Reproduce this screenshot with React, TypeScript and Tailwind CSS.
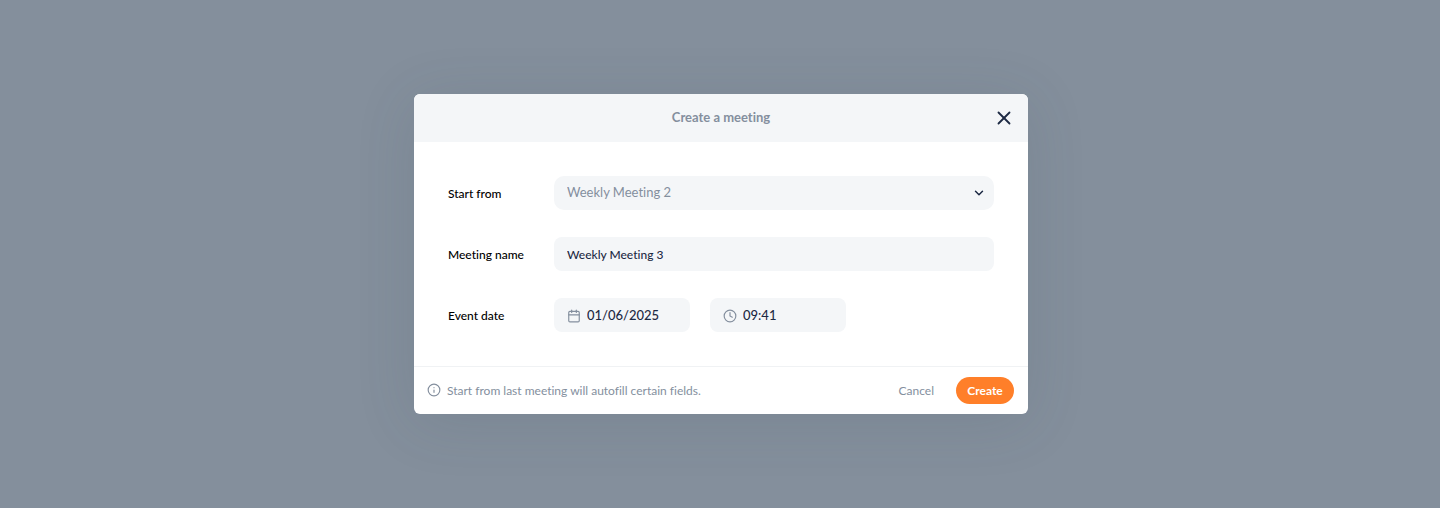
import { Calendar, ChevronDown, Clock, Info, X } from 'lucide-react';
import { useState } from 'react';

type TRowProps = {
  label: string;
  htmlFor: string;
  children: React.ReactNode;
};

function FormRow({ label, htmlFor, children }: TRowProps): React.ReactElement {
  return (
    <div className="flex items-center">
      <label
        htmlFor={htmlFor}
        className="w-[106px] shrink-0 pt-0.5 text-xs font-medium text-black"
      >
        {label}
      </label>
      {children}
    </div>
  );
}

type TIconFieldProps = {
  id: string;
  label: string;
  icon: React.ReactNode;
  defaultValue: string;
};

function IconField({
  id,
  label,
  icon,
  defaultValue,
}: TIconFieldProps): React.ReactElement {
  return (
    <div className="flex h-[34px] w-[136px] items-center gap-1.5 rounded-lg bg-[#f4f6f8] px-[13px] pt-0.5 text-[#848f9e]">
      {icon}
      <input
        id={id}
        type="text"
        aria-label={label}
        defaultValue={defaultValue}
        className="w-full min-w-0 bg-transparent text-[13px] font-medium text-[#1d2a44] outline-none"
      />
    </div>
  );
}

function App(): React.ReactElement {
  const [name, setName] = useState('Weekly Meeting 3');

  return (
    <main className="flex min-h-screen items-center justify-center bg-[#848f9c] pl-0.5 font-['Lato',sans-serif] [font-variant-ligatures:none]">
      <form
        className="w-full max-w-[614px] overflow-hidden rounded-md bg-white shadow-[0_8px_60px_rgba(60,75,95,0.14)]"
        onSubmit={(e) => e.preventDefault()}
      >
        <header className="grid h-12 grid-cols-[1fr_auto_1fr] items-center bg-[#f4f6f8] px-[13px]">
          <h1 className="col-start-2 text-[13px] font-bold text-[#848f9e]">
            Create a meeting
          </h1>
          <button
            type="button"
            aria-label="Close"
            className="justify-self-end text-[#1d2a44]"
          >
            <X className="size-[22px]" strokeWidth={2} />
          </button>
        </header>

        <div className="flex flex-col gap-[27px] p-[34px]">
          <FormRow label="Start from" htmlFor="start-from">
            <div className="relative flex-1">
              <select
                id="start-from"
                className="block h-[34px] w-full appearance-none rounded-[10px] bg-[#f4f6f8] px-[13px] text-[13px] text-[#848f9e] outline-none"
              >
                <option>Weekly Meeting 2</option>
                <option>Weekly Meeting 1</option>
              </select>
              <ChevronDown
                className="pointer-events-none absolute inset-y-0 right-2 my-auto size-3.5 text-[#1d2a44]"
                strokeWidth={2.5}
              />
            </div>
          </FormRow>

          <FormRow label="Meeting name" htmlFor="meeting-name">
            <input
              id="meeting-name"
              type="text"
              value={name}
              onChange={(e) => setName(e.target.value)}
              className="h-[34px] min-w-0 flex-1 rounded-lg bg-[#f4f6f8] px-[13px] pt-px text-xs font-medium text-[#1d2a44] outline-none"
            />
          </FormRow>

          <FormRow label="Event date" htmlFor="event-date">
            <div className="flex gap-5">
              <IconField
                id="event-date"
                label="Event date"
                icon={<Calendar className="size-3.5 shrink-0" />}
                defaultValue="01/06/2025"
              />
              <IconField
                id="event-time"
                label="Event time"
                icon={<Clock className="size-3.5 shrink-0" />}
                defaultValue="09:41"
              />
            </div>
          </FormRow>
        </div>

        <footer className="flex h-12 items-center border-t border-[#f0f2f4] pr-3.5 pb-px pl-[13px] text-xs text-[#848f9e]">
          <Info className="mr-1.5 size-3.5 shrink-0" />
          <p className="flex-1 pt-0.5">
            Start from last meeting will autofill certain fields.
          </p>
          <button type="button" className="mr-[22px] pt-0.5">
            Cancel
          </button>
          <button
            type="submit"
            className="h-[27px] w-[58px] rounded-full bg-[#ff7f29] pt-0.5 font-bold text-white"
          >
            Create
          </button>
        </footer>
      </form>
    </main>
  );
}

export default App;
